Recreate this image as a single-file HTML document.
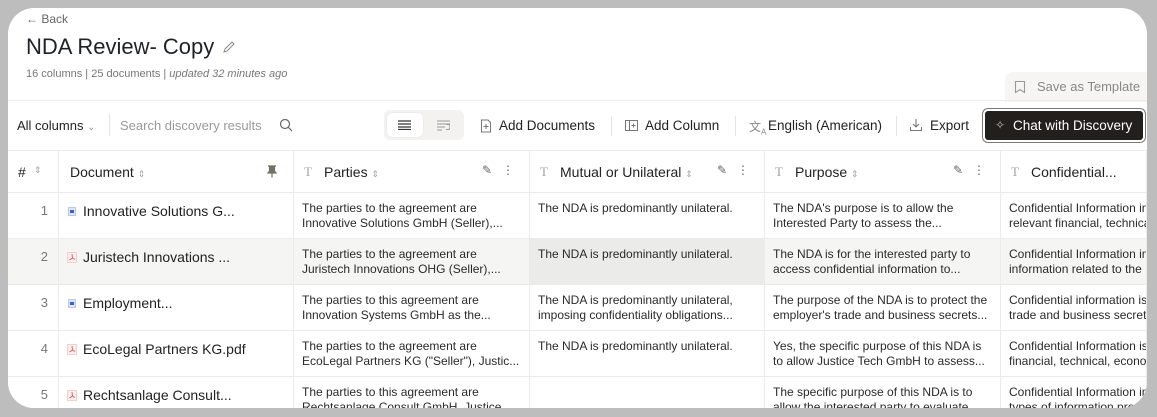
<!DOCTYPE html>
<html><head><style>
*{box-sizing:border-box;margin:0;padding:0}
body{width:1157px;height:417px;background:#bdbdbd;font-family:"Liberation Sans",sans-serif;overflow:hidden;position:relative}
.frame{position:absolute;left:8px;top:8px;width:1139px;height:400px;background:#fff;border-radius:26px;overflow:hidden}
.abs{position:absolute;white-space:nowrap}
.t{font-size:12px;color:#2a2a2a;line-height:15px}
.cell{position:absolute;border-right:1px solid #ecebea;border-bottom:1px solid #ecebea;overflow:hidden}
.hd{font-size:14px;color:#222}
.mute{color:#a8a29e}
svg{position:absolute}
</style></head><body>
<div class="frame">
 <div class="abs" style="left:18px;top:4px;font-size:12px;color:#666">&#8592; Back</div>
 <div class="abs" style="left:18px;top:26px;font-size:22px;color:#1f2328">NDA Review- Copy</div>
 <svg style="left:214px;top:32px" width="14" height="14" viewBox="0 0 14 14"><path d="M2 12 L3 9 L10 2 L12 4 L5 11 Z" fill="none" stroke="#888" stroke-width="1"/></svg>
 <div class="abs" style="left:18px;top:60px;font-size:11px;color:#777">16 columns | 25 documents | <i>updated 32 minutes ago</i></div>
 <div class="abs" style="left:997px;top:64px;width:142px;height:30px;background:#f6f5f4;border-radius:8px 0 0 0"></div>
 <svg style="left:1006px;top:72px" width="12" height="14" viewBox="0 0 12 14"><path d="M1.5 1.5 H10.5 V12.5 L6 9.5 L1.5 12.5 Z" fill="none" stroke="#999" stroke-width="1.1"/></svg>
 <div class="abs" style="left:1029px;top:71px;font-size:13px;color:#888">Save as Template</div>
 <div class="abs" style="left:0;top:92px;width:1139px;height:1px;background:#eeeceb"></div>
 <div class="abs" style="left:9px;top:110px;font-size:13px;color:#222">All columns <span style="color:#999;font-size:10px">&#8964;</span></div>
 <div class="abs" style="left:101px;top:106px;width:1px;height:22px;background:#e5e5e5"></div>
 <div class="abs" style="left:112px;top:110px;font-size:13px;color:#999">Search discovery results</div>
 <svg style="left:271px;top:110px" width="14" height="14" viewBox="0 0 14 14"><circle cx="6" cy="6" r="4.5" fill="none" stroke="#666" stroke-width="1.2"/><path d="M9.5 9.5 L13 13" stroke="#666" stroke-width="1.2"/></svg>
 <div class="abs" style="left:376px;top:102px;width:80px;height:30px;background:#f3f2f1;border-radius:6px"></div>
 <div class="abs" style="left:379px;top:105px;width:36px;height:24px;background:#fff;border-radius:5px;box-shadow:0 0 1px #ccc"></div>
 <svg style="left:390px;top:112px" width="13" height="10" viewBox="0 0 13 10"><path d="M0 1H13M0 4H13M0 7H13M0 9.5H13" stroke="#333" stroke-width="1.2"/></svg>
 <svg style="left:429px;top:112px" width="13" height="11" viewBox="0 0 13 11"><path d="M0 1H13M0 4H13M0 7H8M0 10H5M9.5 4.5H11.5Q13 4.5 13 7Q13 9.5 11 9.5H9" fill="none" stroke="#999" stroke-width="1"/></svg>
 <svg style="left:472px;top:111px" width="12" height="14" viewBox="0 0 12 14"><path d="M1.5 1 H8 L10.5 3.5 V13 H1.5 Z M6 5 V10 M3.5 7.5 H8.5" fill="none" stroke="#777" stroke-width="1"/></svg>
 <div class="abs" style="left:491px;top:110px;font-size:13.5px;color:#222">Add Documents</div>
 <div class="abs" style="left:603px;top:108px;width:1px;height:20px;background:#e5e5e5"></div>
 <svg style="left:617px;top:112px" width="13" height="11" viewBox="0 0 13 11"><rect x="0.5" y="0.5" width="12" height="10" fill="none" stroke="#777"/><path d="M4.5 0.5 V10.5 M8.5 3.5 V7.5 M6.5 5.5 H10.5" stroke="#777"/></svg>
 <div class="abs" style="left:637px;top:110px;font-size:13.5px;color:#222">Add Column</div>
 <div class="abs" style="left:727px;top:108px;width:1px;height:20px;background:#e5e5e5"></div>
 <div class="abs" style="left:741px;top:110px;font-size:12px;color:#888">文<sub style="font-size:8px">A</sub></div>
 <div class="abs" style="left:760px;top:110px;font-size:13.5px;color:#222">English (American)</div>
 <div class="abs" style="left:888px;top:108px;width:1px;height:20px;background:#e5e5e5"></div>
 <svg style="left:901px;top:110px" width="14" height="14" viewBox="0 0 14 14"><path d="M7 1 V9 M4 6 L7 9 L10 6 M1.5 9 V12.5 H12.5 V9" fill="none" stroke="#777" stroke-width="1.1"/></svg>
 <div class="abs" style="left:922px;top:110px;font-size:13.5px;color:#222">Export</div>
 <div class="abs" style="left:975px;top:101px;width:162px;height:33px;background:#231f1c;border-radius:5px;border:2px solid #fff;box-shadow:0 0 0 1px #777"></div>
 <div class="abs" style="left:987px;top:110px;font-size:12px;color:#bbb">✧</div>
 <div class="abs" style="left:1005px;top:110px;font-size:13.5px;color:#fff">Chat with Discovery</div>
 <div class="abs" style="left:0;top:142px;width:1139px;height:1px;background:#eeeceb"></div>

 <div id="tbl" style="position:absolute;left:0;top:143px">
  <div class="cell" style="left:0;top:0;width:51px;height:42px"><span class="abs hd" style="left:10px;top:13px">#</span><span class="abs mute" style="left:26px;top:14px;font-size:9px">&#8661;</span></div>
  <div class="cell" style="left:51px;top:0;width:235px;height:42px"><span class="abs hd" style="left:11px;top:13px">Document <span class="mute" style="font-size:9px">&#8661;</span></span>
   <svg style="left:208px;top:14px" width="10" height="13" viewBox="0 0 10 13"><path d="M1 1H9M2.5 1V6L1 8H9L7.5 6V1M5 8V12.5" fill="#776f68" stroke="#776f68" stroke-width="1.2"/></svg></div>
  <div class="cell" style="left:286px;top:0;width:236px;height:42px"><span class="abs mute" style="left:10px;top:13px;font-size:13px;font-family:'Liberation Serif'">T</span><span class="abs hd" style="left:30px;top:13px">Parties <span class="mute" style="font-size:9px">&#8661;</span></span><span class="abs" style="left:188px;top:12px;color:#666;font-size:12px">&#9998;&nbsp;&nbsp;&nbsp;&#8942;</span></div>
  <div class="cell" style="left:522px;top:0;width:235px;height:42px"><span class="abs mute" style="left:10px;top:13px;font-size:13px;font-family:'Liberation Serif'">T</span><span class="abs hd" style="left:30px;top:13px">Mutual or Unilateral <span class="mute" style="font-size:9px">&#8661;</span></span><span class="abs" style="left:187px;top:12px;color:#666;font-size:12px">&#9998;&nbsp;&nbsp;&nbsp;&#8942;</span></div>
  <div class="cell" style="left:757px;top:0;width:236px;height:42px"><span class="abs mute" style="left:10px;top:13px;font-size:13px;font-family:'Liberation Serif'">T</span><span class="abs hd" style="left:30px;top:13px">Purpose <span class="mute" style="font-size:9px">&#8661;</span></span><span class="abs" style="left:188px;top:12px;color:#666;font-size:12px">&#9998;&nbsp;&nbsp;&nbsp;&#8942;</span></div>
  <div class="cell" style="left:993px;top:0;width:146px;height:42px"><span class="abs mute" style="left:10px;top:13px;font-size:13px;font-family:'Liberation Serif'">T</span><span class="abs hd" style="left:30px;top:13px">Confidential...</span></div>
 </div>
 <div id="rows"></div>
</div>
<script>
var rows=[
["1","w","Innovative Solutions G...","The parties to the agreement are|Innovative Solutions GmbH (Seller),...","The NDA is predominantly unilateral.|","The NDA's purpose is to allow the|Interested Party to assess the...","Confidential Information in|relevant financial, technical"],
["2","p","Juristech Innovations ...","The parties to the agreement are|Juristech Innovations OHG (Seller),...","The NDA is predominantly unilateral.|","The NDA is for the interested party to|access confidential information to...","Confidential Information in|information related to the"],
["3","w","Employment...","The parties to this agreement are|Innovation Systems GmbH as the...","The NDA is predominantly unilateral,|imposing confidentiality obligations...","The purpose of the NDA is to protect the|employer's trade and business secrets...","Confidential information is|trade and business secrets"],
["4","p","EcoLegal Partners KG.pdf","The parties to the agreement are|EcoLegal Partners KG (\"Seller\"), Justic...","The NDA is predominantly unilateral.|","Yes, the specific purpose of this NDA is|to allow Justice Tech GmbH to assess...","Confidential Information is|financial, technical, econo"],
["5","p","Rechtsanlage Consult...","The parties to this agreement are|Rechtsanlage Consult GmbH, Justice...","","The specific purpose of this NDA is to|allow the interested party to evaluate...","Confidential Information in|types of information prov"]];
var h="",L=[0,51,286,522,757,993,1139];
rows.forEach(function(r,i){var top=185+i*46,bg=i==1?"#f5f5f4":"#fff";
for(var c=0;c<6;c++){var b=bg;if(i==1&&c==3)b="#ebebea";
h+='<div class="cell" style="left:'+L[c]+'px;top:'+top+'px;width:'+(L[c+1]-L[c])+'px;height:46px;background:'+b+'">';
if(c==0)h+='<span class="abs" style="right:10px;top:10px;font-size:13px;color:#777">'+r[0]+'</span>';
else if(c==1){h+=(r[1]=="w"?'<span class="abs" style="left:9px;top:14px;width:8px;height:9px;background:#dfe6f7;border:1px solid #b8c6ea"><span style="position:absolute;left:1px;top:2px;width:4px;height:3px;background:#3a63c9"></span></span>':'<svg style="left:8px;top:13px" width="10" height="11" viewBox="0 0 10 11"><rect x="0.5" y="0.5" width="9" height="10" fill="#fbeeee" stroke="#f0d0d0"/><path d="M5 2 L5.5 6 L2.5 8 M5.5 6 L8 7.5" fill="none" stroke="#e05a4f" stroke-width="0.9"/></svg>')+'<span class="abs" style="left:24px;top:10px;font-size:14px;color:#222">'+r[2]+'</span>';}
else{var t=r[c+1].split("|");h+='<div class="abs t" style="left:8px;top:8px">'+t[0]+'<br>'+(t[1]||"")+'</div>';}
h+='</div>';}});
document.getElementById("rows").innerHTML=h;
</script>
</body></html>
